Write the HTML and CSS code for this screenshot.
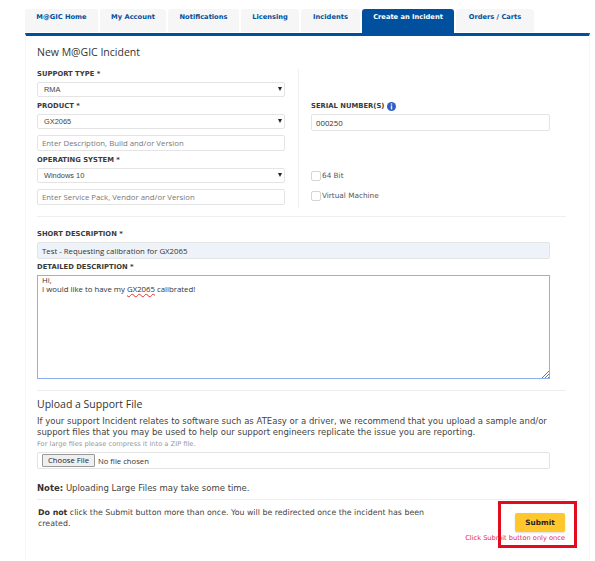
FILE: index.html
```html
<!DOCTYPE html>
<html lang="en">
<head>
    <meta charset="UTF-8">
    <title>Create an Incident</title>
    <link rel="stylesheet" href="styles.css">
</head>
<body>
    <!-- Tabs -->
    <ul class="tabs">
        <li class="tab tab-home">M@GIC Home</li>
        <li class="tab tab-account">My Account</li>
        <li class="tab tab-notify">Notifications</li>
        <li class="tab tab-licensing">Licensing</li>
        <li class="tab tab-incidents">Incidents</li>
        <li class="tab tab-create active">Create an Incident</li>
        <li class="tab tab-orders">Orders / Carts</li>
    </ul>

    <div class="panel">
        <h2 class="title">New M@GIC Incident</h2>

        <div class="columns">
            <div class="col-left">
                <label class="field-label">SUPPORT TYPE *</label>
                <div class="select">RMA<span class="arrow"></span></div>
                <label class="field-label">PRODUCT *</label>
                <div class="select">GX2065<span class="arrow"></span></div>
                <div class="input placeholder gap-top">Enter Description, Build and/or Version</div>
                <label class="field-label">OPERATING SYSTEM *</label>
                <div class="select">Windows 10<span class="arrow"></span></div>
                <div class="input placeholder gap-top">Enter Service Pack, Vendor and/or Version</div>
            </div>
            <div class="col-right">
                <label class="field-label serial-label">SERIAL NUMBER(S)
                    <svg class="info" width="9" height="9" viewBox="0 0 9 9"><circle cx="4.5" cy="4.5" r="4.5" fill="#2f5fc4"/><rect x="3.8" y="1.4" width="1.4" height="1.3" fill="#e8f0ff"/><rect x="3.8" y="3.4" width="1.4" height="4" fill="#e8f0ff"/></svg>
                </label>
                <div class="input serial">000250</div>
                <div class="check check-first"><span class="box"></span>64 Bit</div>
                <div class="check check-second"><span class="box"></span>Virtual Machine</div>
            </div>
        </div>

        <hr class="line line-first">

        <label class="field-label">SHORT DESCRIPTION *</label>
        <div class="input wide filled">Test - Requesting calibration for GX2065</div>
        <label class="field-label detail-label">DETAILED DESCRIPTION *</label>
        <div class="textarea">
            Hi,<br>
            I would like to have my <span class="misspelled">GX2065</span> calibrated!
            <svg class="grip" width="7" height="7" viewBox="0 0 7 7"><path d="M0 7L7 0M3 7L7 3M6 7L7 6" stroke="#777" stroke-width="1" fill="none"/></svg>
        </div>

        <hr class="line line-second">

        <h2 class="title">Upload a Support File</h2>
        <p class="text intro">If your support Incident relates to software such as ATEasy or a driver, we recommend that you upload a sample and/or support files that you may be used to help our support engineers replicate the issue you are reporting.</p>
        <p class="hint">For large files please compress it into a ZIP file.</p>
        <div class="input wide file"><span class="file-btn">Choose File</span>No file chosen</div>
        <p class="text note"><b>Note:</b> Uploading Large Files may take some time.</p>

        <hr class="line line-third">

        <div class="footer">
            <p class="text warning"><b>Do not</b> click the Submit button more than once. You will be redirected once the incident has been created.</p>
            <div class="submit-area">
                <div class="submit">Submit</div>
                <div class="submit-note">Click Submit button only once</div>
            </div>
            <div class="red-box"></div>
        </div>
    </div>
</body>
</html>
```

FILE: styles.css
```css
* {
    margin: 0;
    padding: 0;
    box-sizing: border-box;
}

html, body {
    background: #fff;
    height: 561px;
    overflow: hidden;
}

body {
    padding: 9px 5px 0 25px;
    font-family: "DejaVu Sans", Verdana, sans-serif;
    font-size: 8px;
    color: #333;
}

/* Tabs */
.tabs {
    display: flex;
    align-items: flex-start;
    list-style: none;
    height: 24px;
    gap: 2px;
}

.tab {
    height: 23px;
    background: #f6f6f6;
    color: #00509e;
    font-weight: bold;
    font-size: 6.7px;
    text-align: center;
    line-height: 17px;
    border-radius: 3px 3px 0 0;
}

.tab-home { width: 73px; }
.tab-account { width: 66px; }
.tab-notify { width: 71px; }
.tab-licensing { width: 58px; }
.tab-incidents { width: 59px; }
.tab-create { width: 92px; }
.tab-orders { width: 78px; }

.tab.active {
    height: 24px;
    background: #00509e;
    color: #fff;
}

/* Main panel */
.panel {
    border-top: 3px solid #00509e;
    border-left: 1px solid #f7f7f7;
    border-right: 1px solid #f7f7f7;
    height: 526px;
    padding: 8px 24px 0 11px;
    position: relative;
}

.title {
    font-family: "Open Sans", sans-serif;
    font-weight: 400;
    font-size: 10.5px;
    line-height: 16px;
    color: #333;
}

.columns {
    display: flex;
    margin-top: 9px;
    height: 139px;
}

.col-left {
    width: 262px;
    padding-right: 13px;
    border-right: 1px solid #f0f0f0;
}

.col-right {
    padding-left: 12px;
    flex: 1;
}

.field-label {
    display: block;
    font-weight: bold;
    font-size: 6.8px;
    line-height: 10px;
    color: #3a3a3a;
    margin-bottom: 3px;
}

.select, .input {
    border: 1px solid #e4e4e4;
    border-radius: 2px;
    background: #fff;
    display: flex;
    align-items: center;
}

.select {
    height: 15px;
    margin-bottom: 4px;
    padding-left: 6px;
    position: relative;
    font-family: "Liberation Sans", sans-serif;
    font-size: 7.4px;
    color: #444;
}

.arrow {
    position: absolute;
    right: 2px;
    top: 4px;
    border-left: 2px solid transparent;
    border-right: 2px solid transparent;
    border-top: 4px solid #222;
}

.input {
    height: 16px;
    font-family: "Open Sans", sans-serif;
    font-size: 7.8px;
    padding-left: 4px;
}

.placeholder {
    color: #777;
}

.gap-top {
    margin-top: 6px;
    margin-bottom: 4px;
}

.serial-label {
    margin-top: 32px;
    display: flex;
    align-items: center;
    gap: 3px;
}

.serial {
    width: 239px;
    height: 17px;
    color: #333;
}

.check {
    display: flex;
    align-items: center;
    font-size: 7.3px;
    color: #555;
    height: 11px;
}

.check-first { margin-top: 39px; }
.check-second { margin-top: 9px; }

.box {
    width: 10px;
    height: 10px;
    border: 1px solid #d5d5d5;
    border-radius: 2px;
    margin-right: 1px;
}

.line {
    border: 0;
    border-top: 1px solid #eee;
    width: 529px;
}

.line-first { margin: 8px 0 12px; }
.line-second { margin: 11px 0 5px; }
.line-third { margin: 5px 0 0; }

.wide {
    width: 513px;
}

.filled {
    background: #eef3fa;
    height: 17px;
    color: #333;
}

.detail-label {
    margin-top: 3px;
}

.textarea {
    position: relative;
    width: 513px;
    height: 104px;
    border: 1px solid #8cb0f0;
    padding: 0 4px;
    font-family: "Open Sans", sans-serif;
    font-size: 7.8px;
    line-height: 9.3px;
    color: #333;
}

.misspelled {
    text-decoration: underline wavy #d33 1px;
}

.grip {
    position: absolute;
    right: 0;
    bottom: 0;
}

.text {
    font-size: 8.5px;
    line-height: 11px;
    color: #444;
}

.intro {
    margin-top: 4px;
}

.hint {
    font-size: 6.7px;
    line-height: 11px;
    color: #999;
    margin-top: 1px;
}

.file {
    margin-top: 2px;
    height: 17px;
    font-size: 7.7px;
    color: #333;
}

.file-btn {
    border: 1px solid #999;
    border-radius: 1px;
    background: #efefef;
    height: 13px;
    line-height: 11px;
    padding: 0 5px;
    margin-right: 3px;
    color: #222;
}

.note {
    margin-top: 14px;
}

.note b, .warning b {
    color: #333;
}

.footer {
    display: flex;
    position: relative;
    padding-left: 1px;
}

.text.warning {
    width: 400px;
    margin-top: 7px;
    font-size: 7.85px;
}

.submit-area {
    width: 127px;
    display: flex;
    flex-direction: column;
    align-items: flex-end;
    margin-top: 13px;
}

.submit {
    width: 50px;
    height: 19px;
    background: #ffc72c;
    border-radius: 2px;
    color: #222;
    font-weight: bold;
    font-size: 7.3px;
    line-height: 19px;
    text-align: center;
    box-shadow: 0 1px 2px #ddd;
}

.submit-note {
    margin-top: 1px;
    font-size: 6.65px;
    line-height: 11px;
    color: #e8234a;
    white-space: nowrap;
}

/* Red highlight drawn over the screenshot */
.red-box {
    position: absolute;
    left: 461px;
    top: 1px;
    width: 79px;
    height: 47px;
    border: 3px solid #e30b1e;
}
```
